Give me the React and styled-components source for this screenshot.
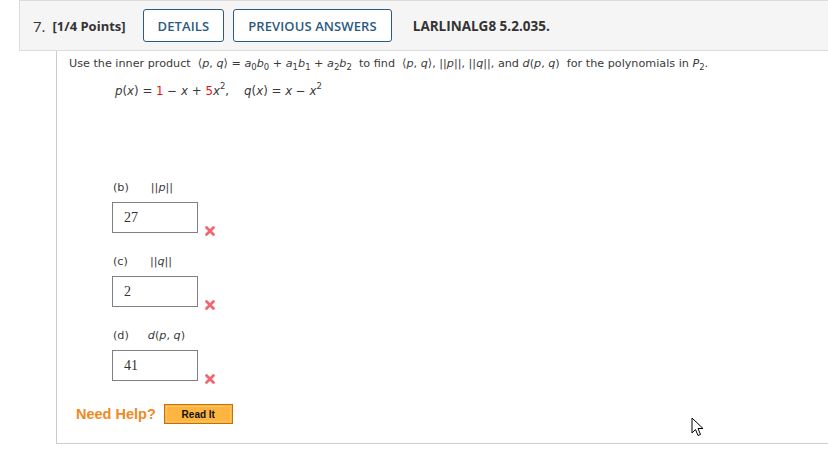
import React from 'react'
import styled, { createGlobalStyle } from 'styled-components'

const Global = createGlobalStyle`
  html, body { margin: 0; padding: 0; background: #fff; }
  body { width: 828px; height: 460px; overflow: hidden; position: relative; }
`

const Page = styled.div`
  padding-left: 19px;
  font-family: "Open Sans", "DejaVu Sans", sans-serif;
`

const Header = styled.div`
  height: 49px;
  display: flex;
  align-items: center;
  background: #f5f5f5;
  border: 1px solid #dcdcdc;
  border-right: none;
  padding-left: 13px;
  gap: 9px;
  color: #333;
`

const Num = styled.span`
  font-size: 15px;
  margin-right: -2px;
`

const Points = styled.span`
  font-size: 13px;
  font-weight: 700;
  margin-right: 8px;
`

const HeadButton = styled.div`
  height: 31px;
  padding: 0 ${p => p.$pad || 14}px;
  display: flex;
  align-items: center;
  border: 1px solid #2c5b7f;
  border-radius: 3px;
  color: #2c5b7f;
  font-size: 13px;
  font-weight: 600;
  letter-spacing: 0.1px;
  background: #fff;
`

const Code = styled.span`
  font-size: 13.5px;
  font-weight: 700;
  margin-left: 12px;
  color: #333;
`

const Body = styled.div`
  box-sizing: border-box;
  margin-left: 37px;
  height: 393px;
  border-left: 1px solid #ccc;
  border-bottom: 1px solid #ccc;
  padding: 5px 0 0 12px;
  font-family: "DejaVu Sans", Verdana, sans-serif;
  font-size: 11.2px;
  color: #3a3a3a;
  display: flex;
  flex-direction: column;
`

const Sentence = styled.div`
  line-height: 16px;
  white-space: nowrap;
`

const Formula = styled.div`
  margin: 11px 0 0 46px;
  line-height: 16px;
  white-space: nowrap;
  font-size: 11.8px;
`

const V = styled.i`
  font-family: "DejaVu Sans", sans-serif;
  font-style: italic;
`

const Red = styled.span`
  color: #e81010;
`

const Sub = styled.sub`
  font-size: 8.5px;
  vertical-align: -3px;
  line-height: 0;
`

const Sup = styled.sup`
  font-size: 8.5px;
  vertical-align: 6px;
  line-height: 0;
`

const Parts = styled.div`
  margin: 82px 0 0 43px;
  display: flex;
  flex-direction: column;
  gap: 22px;
`

const Part = styled.div`
  display: flex;
  flex-direction: column;
`

const Label = styled.div`
  display: flex;
  gap: ${p => p.$gap || 18}px;
  line-height: 14px;
  margin-bottom: 7px;
  margin-left: 1px;
`

const AnswerRow = styled.div`
  display: flex;
  align-items: flex-end;
  gap: 6px;
`

const Answer = styled.div`
  width: 84px;
  height: 29px;
  border: 1px solid #808080;
  box-sizing: content-box;
  font-family: "Liberation Serif", "Times New Roman", serif;
  font-size: 14px;
  color: #333;
  display: flex;
  align-items: center;
  text-indent: 11px;
`

const Help = styled.div`
  margin: 23px 0 0 7px;
  display: flex;
  align-items: center;
  gap: 8px;
`

const HelpText = styled.span`
  font-family: "Liberation Sans", Arial, sans-serif;
  font-weight: 700;
  font-size: 14.5px;
  color: #ee8a1f;
`

const ReadIt = styled.div`
  width: 63px;
  height: 14px;
  border: 1px solid #c07014;
  outline: 1px solid #fcc35e;
  outline-offset: -3px;
  background: #fdb53f;
  display: flex;
  align-items: center;
  justify-content: center;
  font-family: "Liberation Sans", Arial, sans-serif;
  font-weight: 700;
  font-size: 10px;
  color: #111;
  padding: 2px;
`

const Cursor = styled.svg`
  position: absolute;
  left: 691px;
  top: 417px;
`

const Cross = () => (
  <svg width="12" height="12" viewBox="0 0 12 12" style={{ marginBottom: -4 }}>
    <path d="M2.5 2.5 L9.5 9.5 M9.5 2.5 L2.5 9.5" stroke="#f26670" strokeWidth="2.8" strokeLinecap="round" />
  </svg>
)

const answers = [
  { tag: '(b)', gap: 22, label: <span>||<V>p</V>||</span>, value: '27' },
  { tag: '(c)', gap: 22, label: <span>||<V>q</V>||</span>, value: '2' },
  { tag: '(d)', gap: 19, label: <span><V>d</V>(<V>p</V>, <V>q</V>)</span>, value: '41' },
]

export default function App() {
  return (
    <Page>
      <Global />
      <Header>
        <Num>7.</Num>
        <Points>[1/4 Points]</Points>
        <HeadButton $pad={14}>DETAILS</HeadButton>
        <HeadButton $pad={14}>PREVIOUS ANSWERS</HeadButton>
        <Code>LARLINALG8 5.2.035.</Code>
      </Header>
      <Body>
        <Sentence>
          Use the inner product&nbsp; ⟨<V>p</V>, <V>q</V>⟩ = <V>a</V><Sub>0</Sub><V>b</V><Sub>0</Sub> + <V>a</V><Sub>1</Sub><V>b</V><Sub>1</Sub> + <V>a</V><Sub>2</Sub><V>b</V><Sub>2</Sub>&nbsp; to find&nbsp; ⟨<V>p</V>, <V>q</V>⟩, ||<V>p</V>||, ||<V>q</V>||, and <V>d</V>(<V>p</V>, <V>q</V>)&nbsp; for the polynomials in <V>P</V><Sub>2</Sub>.
        </Sentence>
        <Formula>
          <V>p</V>(<V>x</V>) = <Red>1</Red> − <V>x</V> + <Red>5</Red><V>x</V><Sup>2</Sup>,&nbsp;&nbsp;&nbsp; <V>q</V>(<V>x</V>) = <V>x</V> − <V>x</V><Sup>2</Sup>
        </Formula>
        <Parts>
          {answers.map(a => (
            <Part key={a.tag}>
              <Label $gap={a.gap}><span>{a.tag}</span>{a.label}</Label>
              <AnswerRow>
                <Answer>{a.value}</Answer>
                <Cross />
              </AnswerRow>
            </Part>
          ))}
        </Parts>
        <Help>
          <HelpText>Need Help?</HelpText>
          <ReadIt>Read It</ReadIt>
        </Help>
      </Body>
      <Cursor width="14" height="22" viewBox="0 0 14 22">
        <path d="M1 1 L1 16 L4.5 12.5 L7 18.5 L9.5 17.5 L7 11.5 L12 11.5 Z" fill="#fff" stroke="#000" strokeWidth="1" strokeLinejoin="round" />
      </Cursor>
    </Page>
  )
}
